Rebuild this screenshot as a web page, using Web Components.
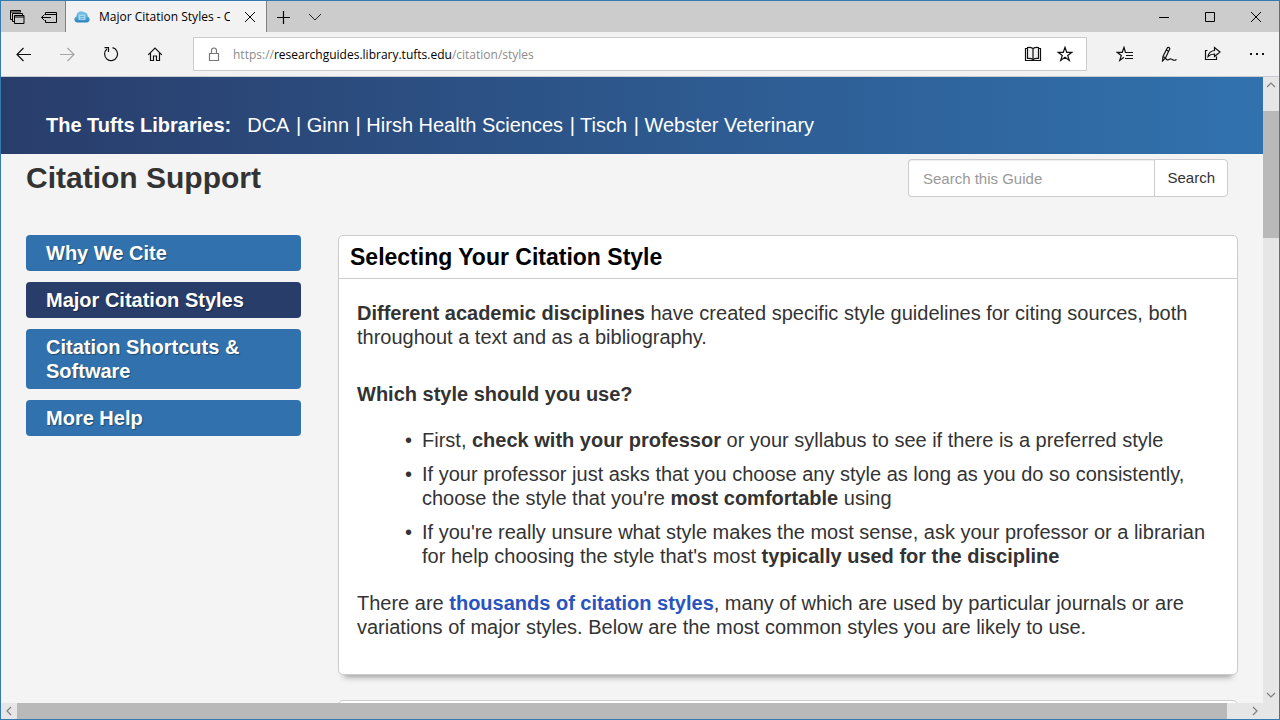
<!DOCTYPE html>
<html lang="en">
<head>
<meta charset="utf-8">
<title>Major Citation Styles - Citation Support</title>
<style>
html,body{margin:0;height:100%}
body{font-family:"Liberation Sans",Arial,sans-serif;overflow:hidden}
</style>
</head>
<body>
<browser-window>
  <tab-strip slot="chrome">Major Citation Styles - Citation Support</tab-strip>
  <address-toolbar slot="chrome">
    <span slot="scheme">https://</span><span slot="host">researchguides.library.tufts.edu</span><span slot="path">/citation/styles</span>
  </address-toolbar>
  <library-banner></library-banner>
  <guide-header>Citation Support</guide-header>
  <guide-layout>
    <guide-nav slot="side">
      <nav-pill>Why We Cite</nav-pill>
      <nav-pill current>Major Citation Styles</nav-pill>
      <nav-pill>Citation Shortcuts &amp; Software</nav-pill>
      <nav-pill>More Help</nav-pill>
    </guide-nav>
    <guide-box>
      <span slot="title">Selecting Your Citation Style</span>
      <citation-intro></citation-intro>
    </guide-box>
    <guide-box></guide-box>
  </guide-layout>
</browser-window>

<script>
const define = (name, html) => {
  const tpl = document.createElement('template');
  tpl.innerHTML = html;
  customElements.define(name, class extends HTMLElement {
    constructor() {
      super();
      this.attachShadow({ mode: 'open' }).append(tpl.content.cloneNode(true));
    }
  });
};

define('browser-window', `
<style>
:host{display:flex;flex-direction:column;box-sizing:border-box;height:100vh;border:1px solid #337ab0;background:#f4f4f4}
.view{flex:1;min-height:0;display:grid;grid-template-columns:minmax(0,1fr) 16px;grid-template-rows:minmax(0,1fr) 16px}
.page{overflow:hidden;background:#f4f4f4}
.corner{background:#e6e6e6}
</style>
<slot name="chrome"></slot>
<div class="view">
  <div class="page"><slot></slot></div>
  <scroll-bar></scroll-bar>
  <scroll-bar across></scroll-bar>
  <div class="corner"></div>
</div>`);

define('scroll-bar', `
<style>
:host{display:flex;flex-direction:column;background:#e6e6e6}
:host([across]){flex-direction:row}
button{all:unset;flex:none;width:16px;height:16px;display:grid;place-items:center}
svg{width:10px;height:10px;fill:none;stroke:#808080;stroke-width:1.2}
.track{flex:1;display:flex;flex-direction:column;padding:18px 0 0}
.thumb{height:22%;background:#b9b9b9}
:host([across]) .track{padding:0;flex-direction:row}
:host([across]) .thumb{width:98.4%;height:100%}
:host([across]) svg{transform:rotate(-90deg)}
</style>
<button aria-label="Scroll back"><svg viewBox="0 0 10 10"><path d="M1 7l4-4 4 4"/></svg></button>
<div class="track"><div class="thumb"></div></div>
<button aria-label="Scroll forward"><svg viewBox="0 0 10 10"><path d="M1 3l4 4 4-4"/></svg></button>`);

define('tab-strip', `
<style>
:host{display:flex;flex:none;height:31px;background:#ccc;font:12px/16px "Open Sans","Noto Sans",sans-serif;color:#000}
button{all:unset;display:grid;place-items:center;width:32px}
svg{display:block;fill:none;stroke:#000}
svg.favicon{stroke:none}
.tab{display:flex;align-items:center;box-sizing:border-box;width:202px;padding:0 8px;gap:9px;background:#f2f2f2;border:solid #808080;border-width:0 1px}
.name{flex:1;min-width:0;overflow:hidden;white-space:nowrap;margin-right:3px}
.tab button{width:16px}
.sys{margin-left:auto;display:flex}
.sys button{width:46px}
</style>
<button aria-label="Tabs you've set aside"><svg width="16" height="16" viewBox="0 0 16 16"><path d="M3 10.500H1.500V1.500H11.500V3M1.500 3H11.500M5.500 12.500H3.500V4.500H13.500V6.500M5.500 6.500H15V14.500H5.500zM5.500 8H15"/></svg></button>
<button aria-label="Set these tabs aside"><svg width="18" height="16" viewBox="0 0 18 16"><path d="M5.500 6V3.500H16.500V13.500H5.500V11M5.500 5.500H16.500M1.500 8.500H11M4.500 5.500l-3 3 3 3"/></svg></button>
<div class="tab">
  <svg class="favicon" width="16" height="16" viewBox="0 0 16 16">
    <defs><linearGradient id="sky" x1="0" y1="0" x2="0" y2="1"><stop offset="0" stop-color="#7cc8ea"/><stop offset="1" stop-color="#2b83bd"/></linearGradient></defs>
    <path d="M3.500 13.500C-.5 13.500-.5 8.500 2.500 7.500 2.500 3 7 1 10 3.300c3 .2 4 2.400 3.500 4.200C17 9 16 13.500 12.500 13.500z" fill="url(#sky)"/><path d="M4.500 5.500h7v5.500h-7z" fill="#a5d8ef"/><path d="M6 7.500h4M6 9.500h4" stroke="#5fb0d8"/></svg>
  <span class="name"><slot></slot></span>
  <button aria-label="Close tab"><svg width="12" height="12" viewBox="0 0 12 12"><path d="M1 1l10 10M11 1L1 11"/></svg></button>
</div>
<button aria-label="New tab"><svg width="14" height="14" viewBox="0 0 14 14"><path d="M7.500 1v13M1 7.500h13" style="stroke-width:1.200"/></svg></button>
<button aria-label="Tab previews"><svg width="14" height="14" viewBox="0 0 14 14"><path d="M1 4l6 6 6-6" style="stroke:#222"/></svg></button>
<div class="sys">
  <button aria-label="Minimize"><svg width="12" height="12" viewBox="0 0 12 12"><path d="M1 6.500h10"/></svg></button>
  <button aria-label="Maximize"><svg width="12" height="12" viewBox="0 0 12 12"><path d="M1.500 1.500h9v9h-9z"/></svg></button>
  <button aria-label="Close"><svg width="12" height="12" viewBox="0 0 12 12"><path d="M1 1l10 10M11 1L1 11"/></svg></button>
</div>`);

define('address-toolbar', `
<style>
:host{display:flex;flex:none;align-items:center;box-sizing:border-box;height:45px;background:#f2f2f2;border-bottom:1px solid #c8ccd0;font:12px/16px "Open Sans","Noto Sans",sans-serif}
button{all:unset;display:grid;place-items:center;width:44px;height:32px}
svg{display:block;fill:none;stroke:#111;stroke-width:1.200}
.off svg{stroke:#a6a6a6}
.group{display:flex}
.back{width:192px}
.address{flex:1;min-width:0;display:flex;align-items:center;box-sizing:border-box;height:34px;padding:0 5px 0 12px;background:#fff;border:1px solid #ccc}
.url{flex:1;min-width:0;padding:2px 0 0 11px;color:#8c8c8c;white-space:nowrap;overflow:hidden;display:flex}
.address button{width:32px}
.host{color:#000}
.tools{padding-left:16px}
.lock{stroke:#777}
</style>
<div class="group back">
  <button aria-label="Back"><svg width="18" height="16" viewBox="0 0 18 16"><path d="M17 8.500H3M9.500 2L3 8.500 9.500 15"/></svg></button>
  <button class="off" aria-label="Forward"><svg width="18" height="16" viewBox="0 0 18 16"><path d="M2 8.500h14M9.500 2L16 8.500 9.500 15"/></svg></button>
  <button aria-label="Refresh"><svg width="16" height="16" viewBox="0 0 16 16"><path d="M9.500 1.700A6.500 6.500 0 1 1 4 3M1.500 1.700H5.500V6"/></svg></button>
  <button aria-label="Home"><svg width="16" height="16" viewBox="0 0 16 16"><path d="M1.200 8.800L8 2l6.800 6.800M3.500 7v7.500h3V10h3v4.500h3V7"/></svg></button>
</div>
<div class="address">
  <svg class="lock" width="16" height="16" viewBox="0 0 16 16"><path d="M3.500 7.500h9v7h-9zM5.500 7.500V4.500a2.500 2.500 0 0 1 5 0v3"/></svg>
  <div class="url" role="textbox" aria-label="Address"><slot name="scheme"></slot><span class="host"><slot name="host"></slot></span><slot name="path"></slot></div>
  <button aria-label="Reading view"><svg width="18" height="16" viewBox="0 0 18 16"><path d="M9 2.500C7.500 1.500 5 1.300 3.500 1.500v11c2-.2 4 0 5.500 1 1.500-1 3.500-1.200 5.500-1v-11c-1.500-.2-4 0-5.500 1z" fill="#f0f0f0"/><path d="M9 2.500v11M3.500 2.500h-2v12h15v-12h-2"/></svg></button>
  <button aria-label="Add to favorites"><svg width="16" height="16" viewBox="0 0 16 16"><path d="M8 1.300l1.700 5h5.100l-4.100 3.100 1.600 5L8 11.300l-4.300 3.100 1.600-5-4.100-3.100h5.100z"/></svg></button>
</div>
<div class="group tools">
  <button aria-label="Favorites hub"><svg width="18" height="16" viewBox="0 0 18 16"><path d="M9.500 6.500L8 1.300l-1.700 5H1.200l4.100 3.100-1.600 5L8 11.300M9 6.500h8M10 9.500h7M9 12.500h8"/></svg></button>
  <button aria-label="Add notes"><svg width="18" height="16" viewBox="0 0 18 16"><path d="M2.500 15l.5-4.500L7 2.500c1-2 3.500-1 2.500 1L5.500 12zM3 10.500L5.500 12M6 3.800l2.500 1.500M5.500 12C7 16 9 12.500 11 13S13.500 15.500 16.500 13.500"/></svg></button>
  <button aria-label="Share"><svg width="18" height="16" viewBox="0 0 18 16"><path d="M3.500 4.500H1.500v9h11v-3M4 10.500C4.500 7 6.500 5 10.500 4.500v-3L16 6l-5.500 4.500V8C8 8 6 8.500 4 10.500z"/></svg></button>
  <button aria-label="Settings and more"><svg width="16" height="16" viewBox="0 0 16 16"><path d="M1 8h2M7 8h2M13 8h2" style="stroke-width:2"/></svg></button>
</div>`);

define('library-banner', `
<style>
:host{display:flex;align-items:center;box-sizing:border-box;height:77px;padding:18px 45px 0;background:linear-gradient(90deg,#293d6b,#3172ae);color:#fff;font-size:20px;line-height:24px;white-space:nowrap}
strong{margin-right:16px}
a{margin-right:1px;color:inherit;text-decoration:none}
</style>
<strong>The Tufts Libraries:</strong>
<nav><a href="#dca">DCA</a> | <a href="#ginn">Ginn</a> | <a href="#hirsh">Hirsh Health Sciences</a> | <a href="#tisch">Tisch</a> | <a href="#webster">Webster Veterinary</a></nav>`);

define('guide-header', `
<style>
:host{display:flex;justify-content:space-between;align-items:center;padding:5px 35px 0 25px}
h1{margin:0;font-size:30px;line-height:36px;color:#333}
form{display:flex;width:320px;height:38px}
input,button{box-sizing:border-box;margin:0;height:100%;font:15px/20px "Liberation Sans",Arial,sans-serif;background:#fff;border:1px solid #ccc;outline:0}
input{flex:1;min-width:0;padding:0 14px;border-radius:4px 0 0 4px;border-right:0;box-shadow:inset 0 1px 1px #eee;color:#333}
input::placeholder{color:#999;opacity:1}
button{flex:none;padding:0 12px;border-radius:0 4px 4px 0;color:#333}
</style>
<h1><slot></slot></h1>
<form role="search"><input type="text" aria-label="Search this Guide" placeholder="Search this Guide"><button type="button">Search</button></form>`);

define('guide-layout', `
<style>
:host{display:grid;grid-template-columns:minmax(0,275fr) minmax(0,900fr);gap:37px;padding:38px 25px 0;align-items:start}
.main{display:grid;gap:25px}
</style>
<slot name="side"></slot>
<div class="main"><slot></slot></div>`);

define('guide-nav', `
<style>
:host{display:block}
nav{display:grid;gap:11px}
</style>
<nav aria-label="Guide pages"><slot></slot></nav>`);

define('nav-pill', `
<style>
:host{display:block}
a{display:block;padding:6px 20px;border-radius:4px;background:#3172ae;color:#fff;font-size:20px;line-height:24px;font-weight:700;text-decoration:none;text-shadow:1px 1px 1px rgba(0,0,0,.35)}
:host([current]) a{background:#293d6b}
</style>
<a href="#page"><slot></slot></a>`);

define('guide-box', `
<style>
:host{display:block;background:#fff;border:1px solid #ccc;border-radius:5px;box-shadow:0 8px 6px -6px #999}
h2{margin:0;padding:8px 11px;font-size:23px;line-height:26px;color:#000;border-bottom:1px solid #ccc}
.body{padding:22px 18px 35px}
</style>
<h2><slot name="title"></slot></h2>
<div class="body"><slot></slot></div>`);

define('citation-intro', `
<style>
:host{display:block;font-size:20px;line-height:24px;color:#333}
p,h3,ul{margin:0}
h3{font-size:20px;line-height:24px;padding:33px 0 22px}
ul{padding:0 0 0 65px;display:grid;gap:10px;margin-bottom:23px;list-style-type:"•\\2002"}
a{color:#2954c0;font-weight:700;text-decoration:none}
</style>
<p><b>Different academic disciplines</b> have created specific style guidelines for citing sources, both throughout a text and as a bibliography.</p>
<h3>Which style should you use?</h3>
<ul>
<li>First, <b>check with your professor</b> or your syllabus to see if there is a preferred style</li>
<li>If your professor just asks that you choose any style as long as you do so consistently, choose the style that you're <b>most comfortable</b> using</li>
<li>If you're really unsure what style makes the most sense, ask your professor or a librarian for help choosing the style that's most <b>typically used for the discipline</b></li>
</ul>
<p>There are <a href="#styles">thousands of citation styles</a>, many of which are used by particular journals or are variations of major styles. Below are the most common styles you are likely to use.</p>`);
</script>
</body>
</html>
